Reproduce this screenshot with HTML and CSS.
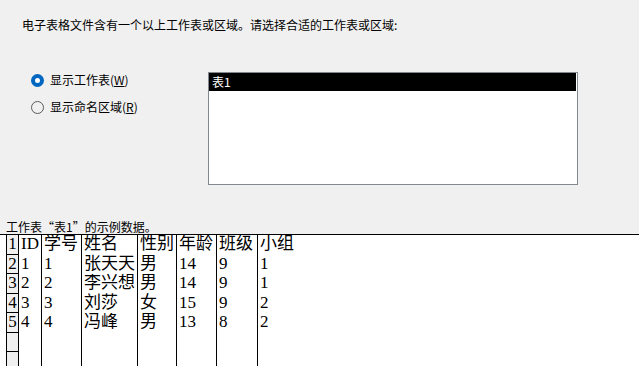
FILE: index.html
```html
<!DOCTYPE html>
<html lang="zh-CN">

<head>
  <meta charset="UTF-8">
  <title>选择工作表</title>
  <link rel="stylesheet" href="styles.css">
</head>

<body>
  <p class="prompt">电子表格文件含有一个以上工作表或区域。请选择合适的工作表或区域:</p>

  <div class="picker">
    <div class="choices">
      <label class="choice"><span class="radio checked"></span>显示工作表(<u>W</u>)</label>
      <label class="choice"><span class="radio"></span>显示命名区域(<u>R</u>)</label>
    </div>
    <div class="listbox">
      <div class="item selected">表1</div>
    </div>
  </div>

  <div class="caption">工作表“表1”的示例数据。</div>

  <!-- Sample grid -->
  <div class="sheet">
    <table>
      <colgroup>
        <col class="c-num">
        <col class="c-id">
        <col class="c-no">
        <col class="c-name">
        <col class="c-sex">
        <col class="c-age">
        <col class="c-class">
        <col class="c-group">
      </colgroup>
      <tr><td class="num">1</td><td>ID</td><td>学号</td><td>姓名</td><td>性别</td><td>年龄</td><td>班级</td><td>小组</td></tr>
      <tr><td class="num">2</td><td>1</td><td>1</td><td>张天天</td><td>男</td><td>14</td><td>9</td><td>1</td></tr>
      <tr><td class="num">3</td><td>2</td><td>2</td><td>李兴想</td><td>男</td><td>14</td><td>9</td><td>1</td></tr>
      <tr><td class="num">4</td><td>3</td><td>3</td><td>刘莎</td><td>女</td><td>15</td><td>9</td><td>2</td></tr>
      <tr><td class="num">5</td><td>4</td><td>4</td><td>冯峰</td><td>男</td><td>13</td><td>8</td><td>2</td></tr>
      <tr><td class="num"></td><td></td><td></td><td></td><td></td><td></td><td></td><td></td></tr>
      <tr class="last"><td class="num"></td><td></td><td></td><td></td><td></td><td></td><td></td><td></td></tr>
    </table>
  </div>
</body>

</html>
```

FILE: styles.css
```css
body {
  margin: 0;
  height: 366px;
  overflow: hidden;
  background: #f0f0f0;
  color: #000;
  font-family: "Noto Sans CJK SC", sans-serif;
  font-size: 12px;
}

.prompt {
  margin: 0;
  padding: 17px 0 0 22px;
  line-height: 16px;
}

/* Radios + sheet list */
.picker {
  display: flex;
  margin-top: 39px;
}

.choices {
  flex: 0 0 208px;
  box-sizing: border-box;
  padding-left: 31px;
  display: flex;
  flex-direction: column;
  gap: 11px;
}

.choice {
  display: flex;
  align-items: center;
  height: 16px;
  line-height: 16px;
}

.radio {
  width: 13px;
  height: 13px;
  box-sizing: border-box;
  border: 1px solid #5a5a5a;
  border-radius: 50%;
  margin-right: 6px;
}

.radio.checked {
  border: 4px solid #0067c0;
  background: #fff;
}

.listbox {
  width: 370px;
  height: 113px;
  box-sizing: border-box;
  border: 1px solid #828790;
  background: #fff;
}

.item {
  height: 18px;
  line-height: 18px;
  padding-left: 3px;
  margin-right: 1px;
}

.item.selected {
  background: #000;
  color: #fff;
}

.caption {
  margin-top: 35px;
  padding-left: 6px;
  line-height: 14px;
}

/* Sample grid */
.sheet {
  height: 132px;
  box-sizing: border-box;
  overflow: hidden;
  padding-left: 6px;
  background: #fff;
  border-top: 1px solid #000;
}

table {
  border-collapse: collapse;
  table-layout: fixed;
  width: 620px;
  font-family: "Liberation Serif", "Noto Sans CJK SC", serif;
  font-size: 17px;
}

.c-num { width: 12px; }
.c-id { width: 23px; }
.c-no { width: 40px; }
.c-name { width: 56px; }
.c-sex { width: 39px; }
.c-age { width: 40px; }
.c-class { width: 41px; }

td {
  height: 18.5px;
  line-height: 18.5px;
  padding: 0 0 0 2px;
  border-left: 1px solid #000;
  white-space: nowrap;
  overflow: hidden;
  vertical-align: middle;
}

td.num {
  padding: 0;
  text-align: center;
  background: #f0f0f0;
  border: 1px solid #000;
  border-top: none;
}

.last td {
  height: 40px;
}
```
